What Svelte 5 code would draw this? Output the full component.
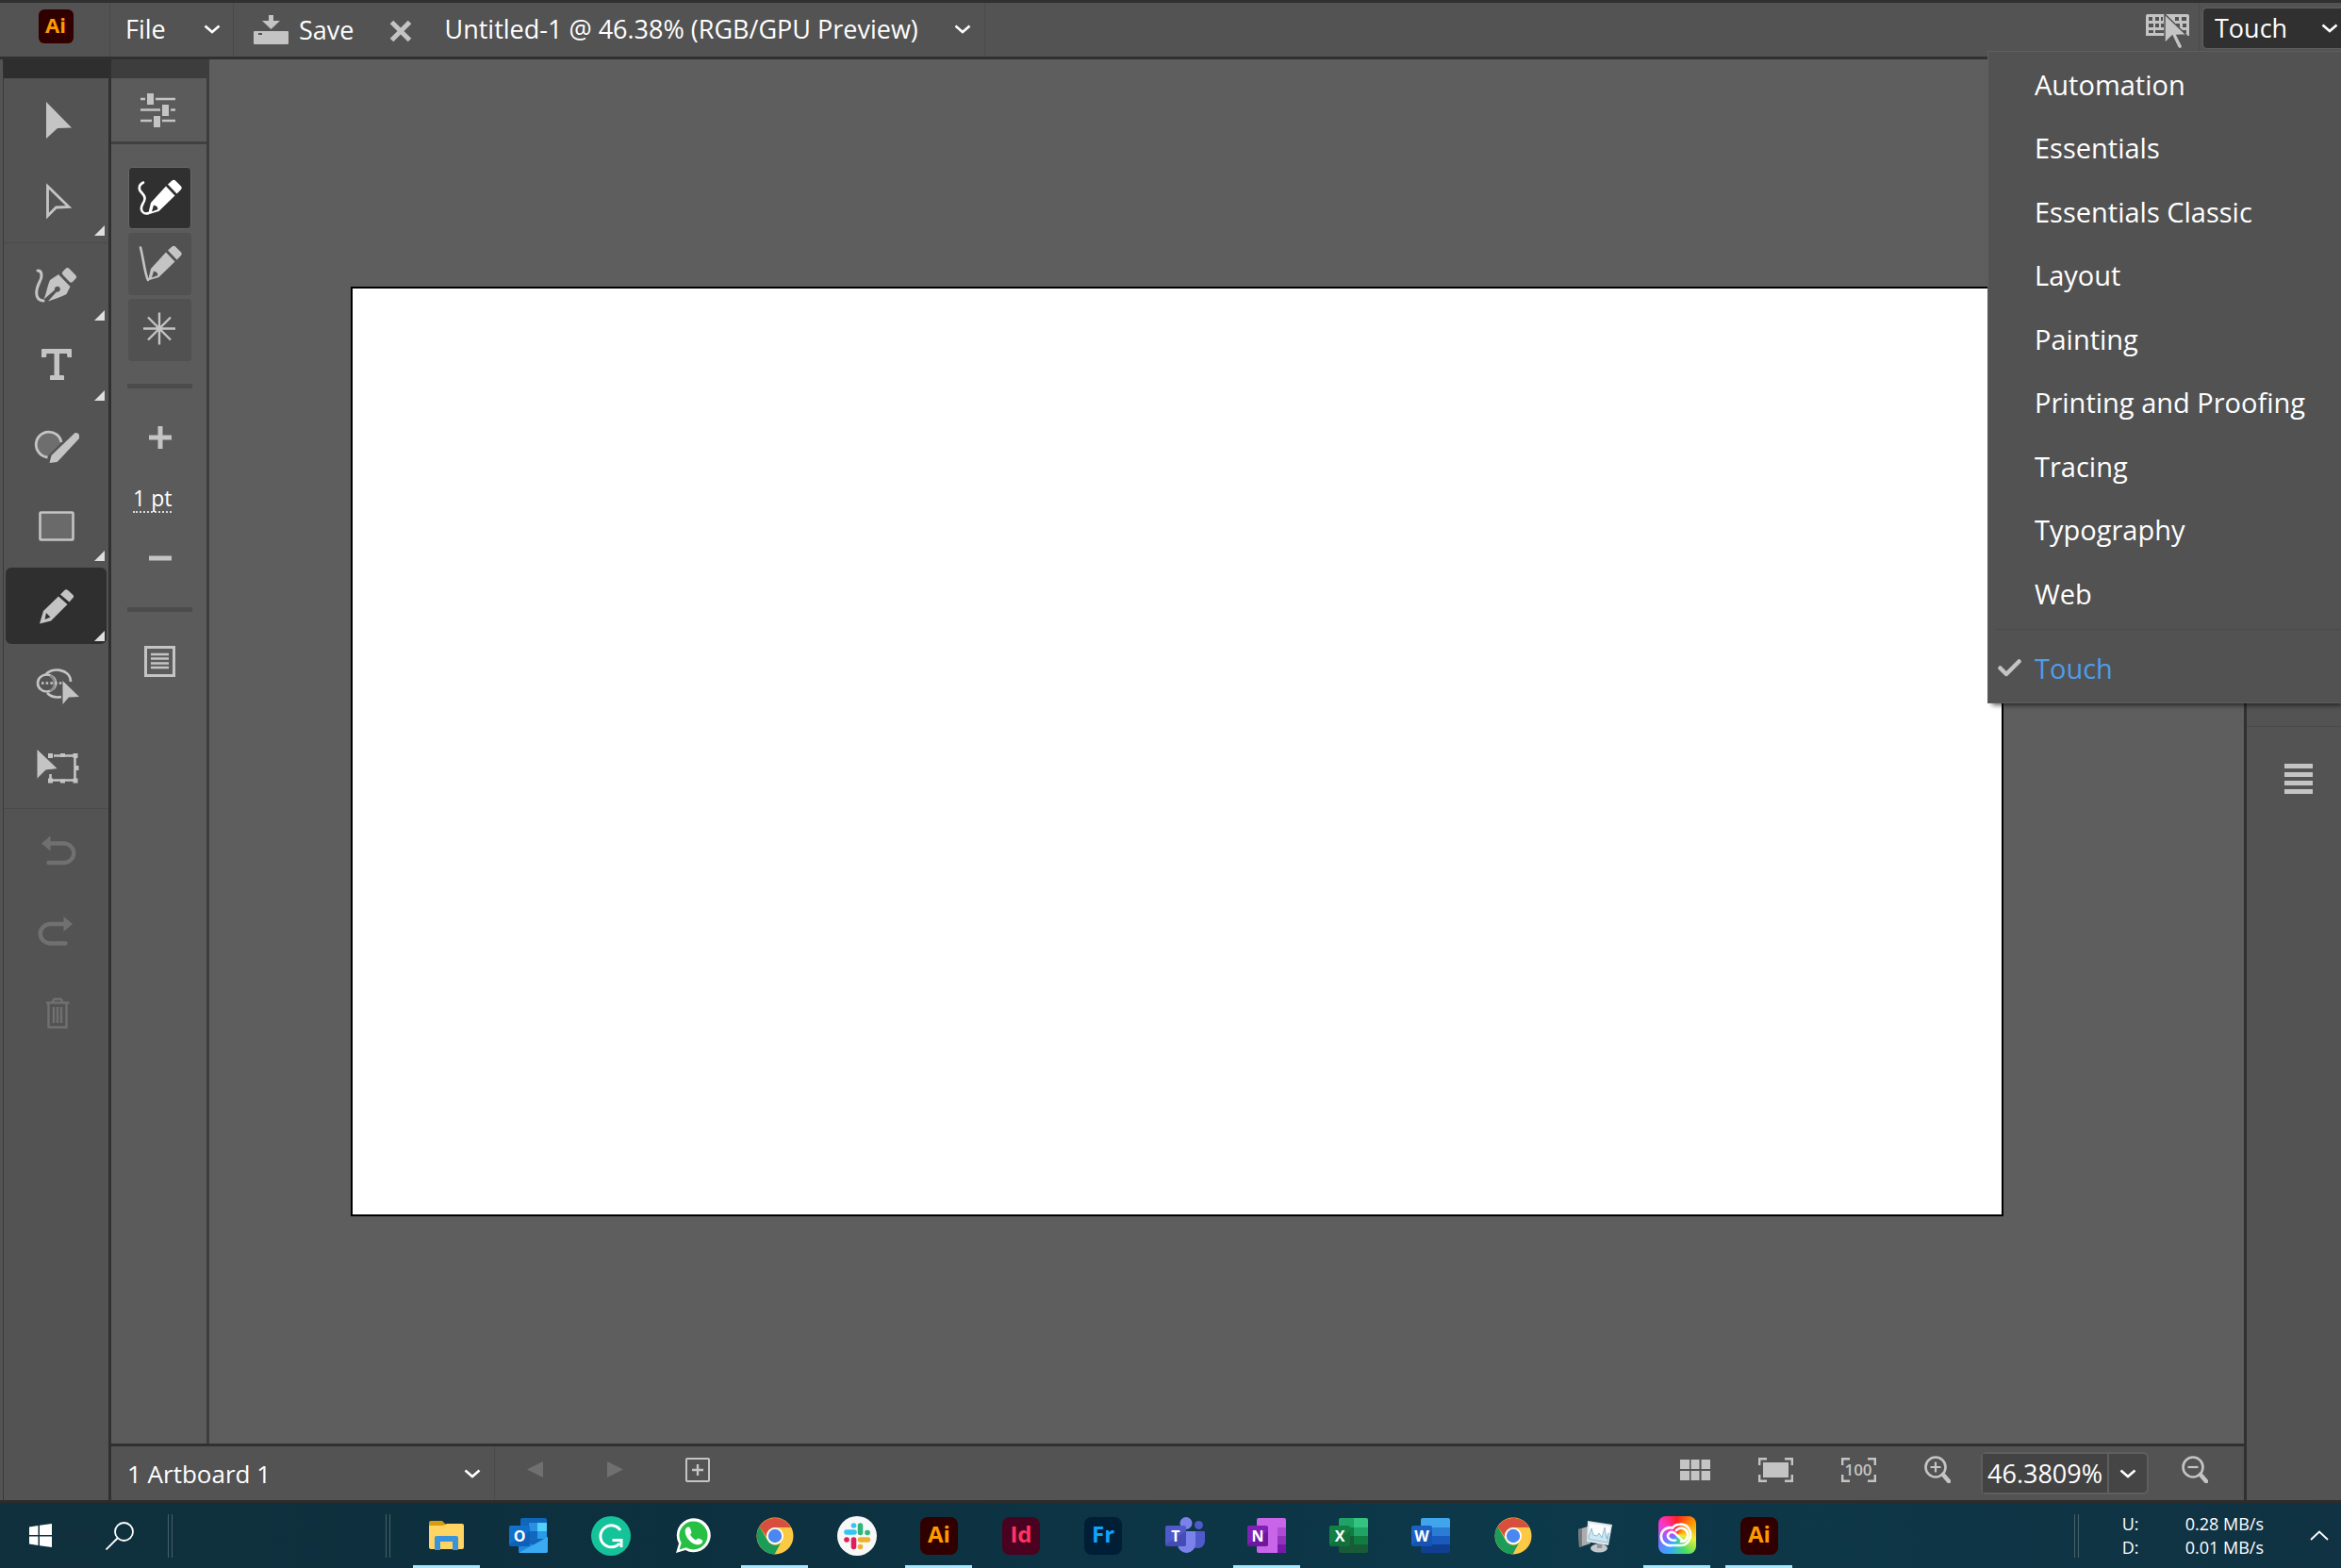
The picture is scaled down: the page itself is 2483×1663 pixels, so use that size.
<script lang="ts">
  type Tool = { id: string; label: string; flyout?: boolean };

  const toolGroups: Tool[][] = [
    [
      { id: "select", label: "Selection" },
      { id: "direct", label: "Direct Selection", flyout: true },
    ],
    [
      { id: "pen", label: "Curvature", flyout: true },
      { id: "type", label: "Type", flyout: true },
      { id: "blob", label: "Blob Brush" },
      { id: "rect", label: "Rectangle", flyout: true },
      { id: "pencil", label: "Pencil", flyout: true },
      { id: "builder", label: "Shape Builder" },
      { id: "transform", label: "Free Transform" },
    ],
    [
      { id: "undo", label: "Undo" },
      { id: "redo", label: "Redo" },
      { id: "trash", label: "Delete" },
    ],
  ];

  const modes = [
    { id: "smooth", label: "Smooth" },
    { id: "accurate", label: "Accurate" },
    { id: "burst", label: "Fidelity" },
  ];

  const workspaces = [
    "Automation",
    "Essentials",
    "Essentials Classic",
    "Layout",
    "Painting",
    "Printing and Proofing",
    "Tracing",
    "Typography",
    "Web",
  ];

  const apps = [
    { id: "folder", label: "File Explorer", running: true },
    { id: "outlook", label: "Outlook" },
    { id: "grammarly", label: "Grammarly" },
    { id: "whatsapp", label: "WhatsApp" },
    { id: "chrome", label: "Chrome", running: true },
    { id: "slack", label: "Slack" },
    { id: "ai", label: "Illustrator", running: true },
    { id: "id", label: "InDesign" },
    { id: "fr", label: "Fresco" },
    { id: "teams", label: "Teams" },
    { id: "onenote", label: "OneNote", running: true },
    { id: "excel", label: "Excel" },
    { id: "word", label: "Word" },
    { id: "chrome", label: "Chrome profile" },
    { id: "monitor", label: "Resource Monitor" },
    { id: "cc", label: "Creative Cloud", running: true },
    { id: "ai", label: "Illustrator window", running: true },
  ];

  let activeTool = $state("pencil");
  let activeMode = $state("smooth");
  let workspace = $state("Touch");
  let zoom = $state("46.3809%");
</script>

{#snippet chevron()}
  <svg class="chevron" width="18" height="10" viewBox="0 0 18 10">
    <path d="M1.5 1.5 9 8l7.5-6.5" fill="none" stroke="currentColor" stroke-width="2.6" />
  </svg>
{/snippet}

{#snippet pencilBody()}
  <path d="M15 29 31 11.5l9.5 10L23.500 38 12 41.5zM18 31.5l-2 7 6.5-2.5-1-3z" fill-rule="evenodd" />
  <path d="m33 9.5 4.500-4a2.500 2.500 0 0 1 3.500 0l6 6a2.500 2.500 0 0 1 0 3.500l-4.500 4.500z" />
{/snippet}

{#snippet glyph(id: string)}
  <svg width="49" height="49" viewBox="0 0 49 49" fill="currentColor">
    {#if id === "select"}
      <path d="m14 5 27 27.5-15 .5-12 11z" />
    {:else if id === "direct"}
      <path d="m15.5 9.5 22.5 22-13.5.5-9 9z" fill="none" stroke="currentColor" stroke-width="2.8" />
    {:else if id === "pen"}
      <path d="M5 9c5 0 5 7 2 12-4 8-6 19 4 20" fill="none" stroke="currentColor" stroke-width="3" stroke-linecap="round" />
      <path d="M11.5 39.5c3-7 3.5-14 6.5-20.5l9-6 12.5 13-4 8c-6 3-14 6-19.5 7.5l9-10a3 3 0 1 0-2-2z" />
      <rect x="31" y="9" width="15" height="9.5" rx="2.5" transform="rotate(45 38.5 13.7)" />
    {:else if id === "type"}
      <path d="M10 7h30a1 1 0 0 1 1 1v8h-4.5l-.5-4h-8v23h4a1 1 0 0 1 1 1v4H18v-4a1 1 0 0 1 1-1h3.500V12h-8l-.5 4H9V8a1 1 0 0 1 1-1z" />
    {:else if id === "blob"}
      <path d="M15 36.5A13.5 13.5 0 1 1 29.5 22z" fill="#6e6e6e" />
      <path d="M15.5 37A13.5 13.5 0 1 1 30 21" fill="none" stroke="currentColor" stroke-width="2.8" />
      <path d="m43 12.5a3.6 3.6 0 0 1 5.5 5L29 38.5l-3.5 3.5-8 1 2-8z" />
    {:else if id === "rect"}
      <rect x="7.5" y="10.5" width="35" height="29" rx="1" fill="#6a6a6a" stroke="currentColor" stroke-width="2.6" />
    {:else if id === "pencil"}
      <path d="m11 30 16-15.500 9.500 8.500L19 40.500 7 43.500zM14 32l-1.500 7 6-2.500z" fill-rule="evenodd" />
      <path d="m29 12.5 4.500-4.500q1.500-1.500 3.500 0l5.500 5q1.500 1.500 0 3l-4 4.500z" />
    {:else if id === "builder"}
      <path d="M13 13C19 4 40 6 40 20M15 32q6 6 15 4" fill="none" stroke="currentColor" stroke-width="2.6" />
      <ellipse cx="14.5" cy="21.5" rx="9.5" ry="9" fill="none" stroke="currentColor" stroke-width="2.6" />
      <path d="M18 13.5a9.5 9.5 0 0 1 0 16.500" fill="none" stroke="#8a8a8a" stroke-width="2.6" />
      <path d="M9 21.5h22" stroke="currentColor" stroke-width="2.6" stroke-dasharray="2.5 2.2" />
      <path d="m31.5 19 17.500 17-11 .5-6.500 7.500z" />
    {:else if id === "transform"}
      <path d="M22 13.5h22.500v26H18.500V33" fill="none" stroke="currentColor" stroke-width="2.6" />
      <path d="M42.5 11h5v5h-5zM42.500 37.500h5v5h-5zM16 37.500h5v5h-5zM16 11h5v5h-5zM29 11h5v4h-5zM29 38.500h5v4h-5zM44 24h4.500v5H44z" />
      <path d="m4 6 22.500 21.500-13 1.500L4 38.500z" stroke="#535353" stroke-width="1" />
    {:else if id === "undo"}
      <path d="M17 16.5h15.500a10.500 10 0 0 1 0 20.500h-16" fill="none" stroke="currentColor" stroke-width="4.4" stroke-linecap="round" />
      <path d="m9 16.5 9.500-8v16z" />
    {:else if id === "redo"}
      <path d="M34 16H18.500a10.500 10 0 0 0 0 20.500h16" fill="none" stroke="currentColor" stroke-width="4.4" stroke-linecap="round" />
      <path d="M42 16 32.500 8v16z" />
    {:else if id === "trash"}
      <path d="M14 13.500h24.500M16.500 14v25.500H35.500V14M21 13q0-3.500 3-3.500h4q3 0 3 3.500M22 18v17M26 18v17M30 18v17" fill="none" stroke="currentColor" stroke-width="2.4" />
    {:else if id === "smooth"}
      <path d="M7 7.500C2 10 1.500 14.500 5 18c5 5 4 8 1.500 12-4 7 .5 12 6 10" fill="none" stroke="currentColor" stroke-width="2.6" stroke-linecap="round" />
      {@render pencilBody()}
    {:else if id === "accurate"}
      <path d="M4 6.500c3 11 5 30 8 34.500" fill="none" stroke="currentColor" stroke-width="2.6" stroke-linecap="round" />
      {@render pencilBody()}
    {:else if id === "burst"}
      <path d="M24 5.500v34M7 22.500h34M12 10.500l24 24M36 10.500l-24 24" fill="none" stroke="currentColor" stroke-width="2.4" />
    {/if}
  </svg>
{/snippet}

{#snippet adobe(text: string, bg: string, fg: string)}
  <rect x="1" y="1" width="40" height="40" rx="8" fill={bg} />
  <text class="mark" x="21" y="28" font-size="24" text-anchor="middle" fill={fg}>{text}</text>
{/snippet}

{#snippet office(letter: string, from: string, to: string)}
  <rect x="0" y="10" width="22" height="22" rx="2" fill={from} />
  <path d="M0 30 22 16v14a2 2 0 0 1-2 2H2a2 2 0 0 1-2-2z" fill={to} opacity="0.5" />
  <text class="mark" x="11" y="27" font-size="16" text-anchor="middle" fill="#fff">{letter}</text>
{/snippet}

{#snippet appIcon(id: string)}
  <svg width="42" height="42" viewBox="0 0 42 42">
    {#if id === "folder"}
      <path d="M2 7a2 2 0 0 1 2-2h12l4 4v6H2z" fill="#d99a0c" />
      <path d="M2 10h15l4-2h16a2 2 0 0 1 2 2v23a2 2 0 0 1-2 2H4a2 2 0 0 1-2-2z" fill="#ffd463" />
      <path d="M8 36V23a2 2 0 0 1 2-2h21a2 2 0 0 1 2 2v13h-6v-9H14v9z" fill="#3a94dc" />
    {:else if id === "outlook"}
      <rect x="12" y="2" width="28" height="34" rx="2" fill="#1066b8" />
      <path d="M21 7h9v9h-9z" fill="#2a8fe0" />
      <path d="M30 7h10v9H30z" fill="#50d0fa" />
      <path d="M21 16h9v10h-9z" fill="#1268bd" />
      <path d="M30 16h10v8H30z" fill="#2a9aea" />
      <path d="M10 22 26 31l15-9v15a2 2 0 0 1-2 2H12a2 2 0 0 1-2-2z" fill="#1d86dc" />
      <path d="m10 39 31-17v15a2 2 0 0 1-2 2z" fill="#3aaaf2" />
      {@render office("O", "#1070cc", "#0a52a8")}
    {:else if id === "grammarly"}
      <circle cx="21" cy="21" r="21" fill="#15c39a" />
      <path d="M31 15a11.5 11.5 0 1 0-1 14M22.500 25.500H32V33" fill="none" stroke="#fff" stroke-width="3" />
    {:else if id === "whatsapp"}
      <path d="m3 39 3-10a18 18 0 1 1 7 7z" fill="#fff" />
      <circle cx="21.5" cy="20.5" r="15" fill="#27c045" />
      <path d="m6.5 35.5 2.500-8 5.500 5.500z" fill="#27c045" />
      <path d="M13 14c2-3 4-3 5-1l1.500 4q0 1-1.500 2.500 2 4 6 6 2-2 3-2l4 2q1 3-3 4.500c-7 2-17-8-15-16z" fill="#fff" />
    {:else if id === "chrome"}
      <circle cx="21" cy="21" r="19.5" fill="#fcc944" />
      <path d="M4.500 11A19.500 19.500 0 0 1 38 12H21a9 9 0 0 0-9 10z" fill="#d94f3d" />
      <path d="M4.500 11 13 25.500a9 9 0 0 0 14 3L20.500 40.500A19.500 19.500 0 0 1 4.500 11z" fill="#1b9c58" />
      <circle cx="21" cy="21" r="9" fill="#fff" />
      <circle cx="21" cy="21" r="7.2" fill="#4b87f0" />
    {:else if id === "slack"}
      <circle cx="21" cy="21" r="21" fill="#f8f8f8" />
      <g stroke-width="5.6" stroke-linecap="round">
        <path d="M10 17h8M17.500 10h.1" stroke="#36c5f0" />
        <path d="M24.500 10v7.500M32 17.500h.1" stroke="#2eb67d" />
        <path d="M24.500 25h8M24.500 32.500h.1" stroke="#ecb22e" />
        <path d="M17.500 25v7.500M10 25h.1" stroke="#e01e5a" />
      </g>
    {:else if id === "ai"}
      {@render adobe("Ai", "#300000", "#ff9a00")}
    {:else if id === "id"}
      {@render adobe("Id", "#49021f", "#ff3366")}
    {:else if id === "fr"}
      {@render adobe("Fr", "#001e36", "#0fa4ff")}
    {:else if id === "teams"}
      <circle cx="22" cy="7.5" r="6.5" fill="#7b83eb" />
      <circle cx="35.5" cy="9.5" r="4.5" fill="#5059c9" />
      <path d="M30 16h11a1 1 0 0 1 1 1v10a8 8 0 0 1-12 6z" fill="#5059c9" />
      <path d="M13 16h19v13a9.500 9.500 0 0 1-19 1z" fill="#7b83eb" />
      {@render office("T", "#5059c9", "#3940a5")}
    {:else if id === "onenote"}
      <rect x="10" y="2" width="31" height="37" rx="2" fill="#c965e8" />
      <path d="M32 12h9v9h-9z" fill="#ae4bd5" />
      <path d="M32 21h9v9h-9z" fill="#9332bf" />
      <path d="M32 30h9v7a2 2 0 0 1-2 2h-7z" fill="#7719aa" />
      {@render office("N", "#8020b4", "#5b1088")}
    {:else if id === "excel"}
      <rect x="10" y="2" width="31" height="37" rx="2" fill="#185c37" />
      <path d="M10 12V4a2 2 0 0 1 2-2h14v10z" fill="#21a366" />
      <path d="M26 2h13a2 2 0 0 1 2 2v8H26z" fill="#33c481" />
      <path d="M10 12h16v9H10z" fill="#107c41" />
      <path d="M26 12h15v9H26z" fill="#21a366" />
      <path d="M26 21h15v9H26z" fill="#107c41" />
      {@render office("X", "#128045", "#0c6233")}
    {:else if id === "word"}
      <rect x="10" y="2" width="31" height="37" rx="2" fill="#103f91" />
      <path d="M10 12V4a2 2 0 0 1 2-2h27a2 2 0 0 1 2 2v8z" fill="#41a5ee" />
      <path d="M10 12h31v9H10z" fill="#2b7cd3" />
      <path d="M10 21h31v9H10z" fill="#185abd" />
      {@render office("W", "#1c60c4", "#1048a0")}
    {:else if id === "monitor"}
      <path d="m3 14 10-3 3 18-12 4z" fill="#a9adb0" />
      <path d="m3 14 4-1v19l-3 1z" fill="#74797c" />
      <ellipse cx="25" cy="34" rx="9" ry="4.5" fill="#c5c8ca" />
      <path d="m23 26 6 1-1 7h-5z" fill="#8f9497" />
      <path d="m13 5 26 4-4 22-23-4z" fill="#e4e7e9" />
      <path d="m15 7.500 22 3.500-3 17-20-3.500z" fill="#fbfdfe" />
      <path d="m14 22 3-9 2 7 4 1 2-3 3 5 3-11 2 12 2-6-1 10-20-3.500z" fill="#cde7f2" stroke="#8dbdd3" />
    {:else if id === "cc"}
      <foreignObject x="1" y="0" width="40" height="40"><div class="rainbow"></div></foreignObject>
      <path d="M15 31a9.500 9.500 0 1 1 1-18.500C19 8 28 7 32.500 12 38 19 34 31 25 31z" fill="none" stroke="#fff" stroke-width="2.6" />
      <path d="m27 26-8-7.500c-5-4-10 1-7 5q3 3 7 2" fill="none" stroke="#fff" stroke-width="2.6" stroke-linecap="round" />
      <path d="M20 15c5-5 13-1 12 6q-1 6-7 6" fill="none" stroke="#fff" stroke-width="2.6" stroke-linecap="round" />
    {/if}
  </svg>
{/snippet}

<div class="desktop">
  <header class="topbar">
    <div class="logo-cell">
      <svg width="37" height="36" viewBox="0 0 37 36" role="img" aria-label="Illustrator">
        <rect width="37" height="36" rx="6" fill="#300000" />
        <text class="mark" x="18" y="25" font-size="22" text-anchor="middle" fill="#ff9a00">Ai</text>
      </svg>
    </div>
    <button class="bar-btn file">File {@render chevron()}</button>
    <button class="bar-btn save">
      <svg width="37" height="32" viewBox="0 0 37 32" fill="#c4c4c4">
        <path d="M16 0h5v6h7l-9.500 9L9 6h7z" />
        <path d="M1 17h35a1 1 0 0 1 1 1v12a1 1 0 0 1-1 1H1a1 1 0 0 1-1-1V18a1 1 0 0 1 1-1zm4 2v2h4v-2z" fill-rule="evenodd" />
      </svg>
      Save
    </button>
    <button class="bar-btn close" aria-label="Close document">
      <svg width="24" height="24" viewBox="0 0 24 24">
        <path d="m2.5 2.500 19 19M21.500 2.500l-19 19" stroke="#c4c4c4" stroke-width="5" />
      </svg>
    </button>
    <button class="bar-btn title">Untitled-1 @ 46.38% (RGB/GPU Preview) {@render chevron()}</button>
    <button class="bar-btn keyboard" aria-label="Keyboard and pointer">
      <svg width="46" height="38" viewBox="0 0 46 38">
        <path d="M2 0h42a2 2 0 0 1 2 2v21H0V2a2 2 0 0 1 2-2z" fill="#c4c4c4" />
        <path
          d="M3 3h4v4H3zM10 3h4v4h-4zM16 3h2v4h-2zM31 3h4v4h-4zM38 3h5v4h-5zM3 10h5v4H3zM10 10h4v4h-4zM16 10h3v4h-3zM32 10h4v4h-4zM39 10h4v4h-4zM3 17h5v3H3zM10 17h9v3h-9zM39 17h4v3h-4z"
          fill="#535353"
        />
        <path d="M20 0v31l8-8 6 12.500a2.500 2.500 0 0 0 4.500-2L33 22.500l10-.5z" fill="#c4c4c4" stroke="#535353" stroke-width="1.5" />
      </svg>
    </button>
    <div class="workspace-cell">
      <div class="select-wrap dark">
        <select aria-label="Workspace" bind:value={workspace}>
          <option>Touch</option>
        </select>
        {@render chevron()}
      </div>
      <ul class="menu">
        {#each workspaces as name}
          <li><button class="menu-item">{name}</button></li>
        {/each}
        <li class="current">
          <button class="menu-item checked">
            <svg width="25" height="19" viewBox="0 0 25 19">
              <path d="m2.5 9.500 6.500 6.500L22.500 2.500" fill="none" stroke="#c4c4c4" stroke-width="4.5" stroke-linecap="round" stroke-linejoin="round" />
            </svg>
            Touch
          </button>
        </li>
      </ul>
    </div>
  </header>

  <main>
    <nav class="toolbar" aria-label="Tools">
      {#each toolGroups as group}
        <div class="tool-group">
          {#each group as tool}
            <button
              class="tool"
              class:active={activeTool === tool.id}
              disabled={group === toolGroups[2]}
              aria-label={tool.label}
              onclick={() => (activeTool = tool.id)}
            >
              {@render glyph(tool.id)}
              {#if tool.flyout}<span class="flyout"></span>{/if}
            </button>
          {/each}
        </div>
      {/each}
    </nav>

    <div class="workarea">
      <div class="document">
        <aside class="options">
          <button class="options-head" aria-label="Tool options">
            <svg width="37" height="36" viewBox="0 0 37 36">
              <path d="M0 6h5M16 6h21M0 17.500h21M32 17.500h5M0 29h12M23 29h14" stroke="#c4c4c4" stroke-width="2.6" />
              <path d="M7 0h7v12H7zM23 12h7v12h-7zM14 24h7v12h-7z" fill="#c4c4c4" />
            </svg>
          </button>
          <div class="options-body">
            <div class="modes">
              {#each modes as mode}
                <button
                  class="mode"
                  class:active={activeMode === mode.id}
                  aria-label={mode.label}
                  onclick={() => (activeMode = mode.id)}>{@render glyph(mode.id)}</button
                >
              {/each}
            </div>
            <div class="stroke">
              <button class="step" aria-label="Increase stroke">
                <svg width="24" height="24" viewBox="0 0 24 24">
                  <path d="M12 0v24M0 12h24" stroke="#c4c4c4" stroke-width="5" />
                </svg>
              </button>
              <button class="weight">1 pt</button>
              <button class="step" aria-label="Decrease stroke">
                <svg width="24" height="24" viewBox="0 0 24 24">
                  <path d="M0 12h24" stroke="#c4c4c4" stroke-width="5" />
                </svg>
              </button>
            </div>
            <button class="step" aria-label="Properties">
              <svg width="33" height="33" viewBox="0 0 33 33" fill="none" stroke="#c4c4c4">
                <rect x="1.5" y="1.5" width="30" height="30" stroke-width="3" />
                <path d="M7 9h19M7 13.500h19M7 18.500h19M7 23h19" stroke-width="2.4" />
              </svg>
            </button>
          </div>
        </aside>
        <section class="canvas" aria-label="Canvas">
          <div class="artboard"></div>
        </section>
      </div>

      <footer class="status">
        <div class="select-wrap artboards">
          <select aria-label="Artboard">
            <option>1 Artboard 1</option>
          </select>
          {@render chevron()}
        </div>
        <div class="status-nav">
          <button class="bar-btn" disabled aria-label="Previous artboard">
            <svg width="18" height="18" viewBox="0 0 18 18"><path d="M17 0v17L0 8.500z" fill="#707070" /></svg>
          </button>
          <button class="bar-btn" disabled aria-label="Next artboard">
            <svg width="18" height="18" viewBox="0 0 18 18"><path d="M1 0v17l17-8.500z" fill="#707070" /></svg>
          </button>
          <button class="bar-btn" aria-label="Add artboard">
            <svg width="26" height="26" viewBox="0 0 26 26" fill="none" stroke="#c4c4c4">
              <rect x="1" y="1" width="24" height="24" rx="1" stroke-width="2" />
              <path d="M13 7v12M7 13h12" stroke-width="2.4" />
            </svg>
          </button>
        </div>
        <div class="status-view">
          <button class="bar-btn" aria-label="Artboard grid">
            <svg width="32" height="22" viewBox="0 0 32 22" fill="#c4c4c4">
              <path d="M0 0h10v10H0zM11.500 0h9v10h-9zM22.500 0H32v10h-9.500zM0 12h10v10H0zM11.500 12h9v10h-9zM22.500 12H32v10h-9.500z" />
            </svg>
          </button>
          <button class="bar-btn" aria-label="Fit artboard">
            <svg width="37" height="26" viewBox="0 0 37 26">
              <path d="M9 1.200H1.200V8M28 1.200h7.800V8M9 24.800H1.200V18M28 24.800h7.800V18" fill="none" stroke="#c4c4c4" stroke-width="2.4" />
              <path d="M5 5h27v16H5z" fill="#c4c4c4" />
            </svg>
          </button>
          <button class="bar-btn" aria-label="Actual size">
            <svg width="37" height="26" viewBox="0 0 37 26">
              <path d="M9 1.200H1.200V8M28 1.200h7.800V8M9 24.800H1.200V18M28 24.800h7.800V18" fill="none" stroke="#c4c4c4" stroke-width="2.4" />
              <text class="mark light" x="18" y="19" font-size="17" text-anchor="middle" fill="#c4c4c4">100</text>
            </svg>
          </button>
          <button class="bar-btn" aria-label="Zoom in">
            <svg width="28" height="29" viewBox="0 0 28 29" fill="none" stroke="#c4c4c4">
              <circle cx="12" cy="12" r="10.5" stroke-width="2.6" />
              <path d="M12 6.500v11M6.500 12h11" stroke-width="2.2" />
              <path d="m20 20 6 7" stroke-width="4.5" stroke-linecap="round" />
            </svg>
          </button>
          <div class="zoom">
            <input aria-label="Zoom level" bind:value={zoom} />
            <button class="zoom-drop" aria-label="Zoom presets">{@render chevron()}</button>
          </div>
          <button class="bar-btn" aria-label="Zoom out">
            <svg width="28" height="29" viewBox="0 0 28 29" fill="none" stroke="#c4c4c4">
              <circle cx="12" cy="12" r="10.5" stroke-width="2.6" />
              <path d="M6.500 12h11" stroke-width="2.2" />
              <path d="m20 20 6 7" stroke-width="4.5" stroke-linecap="round" />
            </svg>
          </button>
        </div>
      </footer>
    </div>

    <aside class="dock">
      <div class="dock-head"></div>
      <button class="bar-btn" aria-label="Panels">
        <svg width="30" height="32" viewBox="0 0 30 32" fill="#c4c4c4">
          <path d="M0 0h30v5H0zM0 9h30v5H0zM0 18h30v5H0zM0 27h30v5H0z" />
        </svg>
      </button>
    </aside>
  </main>

  <div class="taskbar">
    <button class="bar-btn start" aria-label="Start">
      <svg width="24" height="25" viewBox="0 0 24 25" fill="#fff">
        <path d="M0 3.500 9.500 2v10H0zM11 1.800 24 0v12H11zM0 13.500h9.500V23L0 21.500zM11 13.500h13V25l-13-1.800z" />
      </svg>
    </button>
    <button class="bar-btn search" aria-label="Search">
      <svg width="30" height="30" viewBox="0 0 30 30" fill="none" stroke="#fff" stroke-width="1.8">
        <circle cx="19.5" cy="10.5" r="9.5" />
        <path d="M12.500 17.500.5 29.500" />
      </svg>
    </button>
    <span class="grip"></span>
    <div class="pinned-gap"></div>
    <span class="grip"></span>
    <div class="apps">
      {#each apps as app}
        <button class="app" class:running={app.running} aria-label={app.label}>{@render appIcon(app.id)}</button>
      {/each}
    </div>
    <span class="grip end"></span>
    <div class="net">
      <span>U:</span><span>0.28 MB/s</span>
      <span>D:</span><span>0.01 MB/s</span>
    </div>
    <button class="bar-btn tray" aria-label="Show hidden icons">
      <svg width="20" height="11" viewBox="0 0 20 11">
        <path d="m1 10 9-8.500 9 8.500" fill="none" stroke="#fff" stroke-width="1.8" />
      </svg>
    </button>
  </div>
</div>

<style>
  :global(body) {
    margin: 0;
    background: #535353;
  }

  .desktop {
    --panel: #535353;
    --line: #303030;
    --icon: #c4c4c4;
    display: flex;
    flex-direction: column;
    min-height: 100vh;
    overflow: hidden;
    box-sizing: border-box;
    background: var(--panel);
    color: #fff;
    font-family: "Open Sans", "Noto Sans", sans-serif;
    font-size: 27px;
    line-height: 36px;
  }

  button,
  select,
  input {
    margin: 0;
    padding: 0;
    border: 0;
    background: none;
    color: inherit;
    font: inherit;
  }

  svg {
    display: block;
    flex-shrink: 0;
  }

  .mark {
    font-family: "Open Sans", "Noto Sans", sans-serif;
    font-weight: 700;
  }

  .mark.light {
    font-weight: 600;
  }

  .bar-btn {
    display: flex;
    align-items: center;
    justify-content: center;
    white-space: nowrap;
  }

  /* top bar */
  .topbar {
    display: flex;
    height: 57px;
    border-top: 3px solid var(--line);
    border-bottom: 3px solid var(--line);
  }

  .logo-cell {
    display: flex;
    justify-content: center;
    width: 117px;
    padding: 7px 0 0 2px;
    box-sizing: border-box;
    border-right: 1px solid #4a4a4a;
  }

  .file {
    justify-content: space-between;
    width: 131px;
    box-sizing: border-box;
    padding: 0 13px 2px 16px;
    border-right: 1px solid #4a4a4a;
  }

  .save {
    gap: 11px;
    padding-left: 21px;
  }

  .close {
    padding: 2px 34px 0 38px;
  }

  .title {
    gap: 38px;
    padding: 0 14px 2px 0;
    border-right: 1px solid #4a4a4a;
  }

  .keyboard {
    margin-left: auto;
    padding: 4px 10px 0 0;
    border-right: 1px solid #4a4a4a;
  }

  .workspace-cell {
    position: relative;
    width: 150px;
    padding: 5px 0 8px 3px;
    box-sizing: border-box;
  }

  .select-wrap {
    display: flex;
    align-items: center;
    position: relative;
    height: 100%;
  }

  .select-wrap select {
    appearance: none;
    width: 100%;
    height: 100%;
    padding-left: 12px;
  }

  .select-wrap .chevron {
    position: absolute;
    right: 14px;
    pointer-events: none;
  }

  .dark {
    background: var(--line);
    border: 1px solid #606060;
    border-right: 0;
    border-radius: 5px 0 0 5px;
    box-sizing: border-box;
  }

  .select-wrap.dark .chevron {
    right: 3px;
  }

  .menu {
    position: absolute;
    z-index: 2;
    top: 51px;
    right: 0;
    width: 375px;
    box-sizing: border-box;
    margin: 0;
    padding: 1px 0 2px;
    list-style: none;
    background: #525252;
    border: 1px solid #5e5e5e;
    border-right: 0;
    box-shadow: 3px 4px 5px -2px rgba(0, 0, 0, 0.6);
    font-size: 29px;
  }

  .menu-item {
    display: flex;
    align-items: center;
    width: 100%;
    height: 67px;
    padding-left: 49px;
  }

  .menu li:nth-child(even) {
    padding-bottom: 1px;
  }

  .menu .current {
    margin: 4px 0 0 7px;
    padding: 7px 0 0;
    border-top: 1px solid #4b4b4b;
  }

  .checked {
    gap: 14px;
    padding-left: 3px;
    color: #4f9ce8;
  }

  main {
    display: flex;
    flex: 1;
    border-bottom: 3px solid #2c2c2c;
  }

  /* tool column */
  .toolbar {
    width: 111px;
    flex-shrink: 0;
    border-top: 20px solid #2e2e2e;
    border-right: 3px solid var(--line);
    border-left: 1px solid #3a3a3a;
    margin-left: 3px;
  }

  .tool-group {
    display: flex;
    flex-direction: column;
    padding: 2px 0;
  }

  .tool-group + .tool-group {
    border-top: 1px solid #4a4a4a;
  }

  .tool-group:last-child {
    gap: 1px;
  }

  .tool {
    display: flex;
    position: relative;
    align-items: center;
    justify-content: center;
    width: 100%;
    height: 85px;
    border: 2px solid transparent;
    border-radius: 8px;
    background-clip: padding-box;
    color: var(--icon);
  }

  .tool.active {
    background-color: #2f2f2f;
  }

  .tool:disabled {
    color: #707070;
  }

  .flyout {
    position: absolute;
    right: 2px;
    bottom: 3px;
    border-bottom: 11px solid #dedede;
    border-left: 11px solid transparent;
  }

  /* options column */
  .workarea {
    display: flex;
    flex: 1;
    flex-direction: column;
    min-width: 0;
  }

  .document {
    display: flex;
    flex: 1;
  }

  .options {
    display: flex;
    flex-direction: column;
    width: 101px;
    flex-shrink: 0;
    background: #5b5b5b;
    border-top: 20px solid #3d3d3d;
    border-right: 3px solid #3d3d3d;
  }

  .options-head {
    display: flex;
    align-items: center;
    justify-content: center;
    height: 70px;
    padding-right: 2px;
    border-bottom: 3px solid #404040;
  }

  .options-body {
    display: flex;
    flex-direction: column;
    align-items: center;
    padding: 24px 0 0 2px;
  }

  .modes {
    display: flex;
    flex-direction: column;
    gap: 4px;
  }

  .mode {
    display: flex;
    align-items: center;
    justify-content: center;
    width: 67px;
    height: 66px;
    border-radius: 4px;
    background: #515151;
    color: var(--icon);
  }

  .mode.active {
    background: var(--line);
    border: 1px solid #676767;
    color: #fff;
  }

  .stroke {
    display: flex;
    flex-direction: column;
    align-items: center;
    width: 69px;
    margin: 24px 0 36px;
    padding: 40px 0;
    border-top: 5px solid #4c4c4c;
    border-bottom: 5px solid #4c4c4c;
  }

  .weight {
    align-self: flex-start;
    margin: 38px 0 36px 6px;
    border-bottom: 2px dotted #d8d8d8;
    font-size: 23px;
    line-height: 28px;
  }

  /* canvas */
  .canvas {
    display: flex;
    flex: 1;
    padding: 241px 255px 241px 150px;
    background: #5e5e5e;
  }

  .artboard {
    flex: 1;
    background: #fff;
    border: 2px solid #000;
  }

  /* status bar */
  .status {
    display: flex;
    height: 57px;
    border-top: 3px solid var(--line);
  }

  .artboards {
    width: 407px;
    box-sizing: border-box;
    border-right: 1px solid #4a4a4a;
    font-size: 26px;
  }

  .artboards select {
    padding-left: 17px;
  }

  .status-nav,
  .status-view {
    display: flex;
    align-items: center;
  }

  .status .bar-btn {
    padding-bottom: 8px;
  }

  .status-nav {
    gap: 66px;
    padding-left: 34px;
  }

  .status-view {
    gap: 51px;
    margin-left: auto;
    padding-right: 38px;
  }

  .zoom {
    display: flex;
    width: 178px;
    height: 45px;
    box-sizing: border-box;
    margin: 0 -16px 0 -19px;
    border: 2px solid #5f5f5f;
    border-radius: 6px;
    background: #454545;
  }

  .zoom input {
    width: 134px;
    padding-left: 5px;
    box-sizing: border-box;
    border-right: 2px solid #5f5f5f;
    background: #434343;
  }

  .zoom-drop {
    display: flex;
    flex: 1;
    align-items: center;
    justify-content: center;
  }

  /* right dock */
  .dock {
    display: flex;
    flex-direction: column;
    align-items: center;
    width: 100px;
    flex-shrink: 0;
    border-left: 3px solid var(--line);
  }

  .dock-head {
    width: 100%;
    height: 707px;
    margin-bottom: 39px;
    border-bottom: 1px solid #4a4a4a;
  }

  .dock .bar-btn {
    margin-left: 10px;
  }

  /* taskbar */
  .taskbar {
    display: flex;
    align-items: center;
    height: 69px;
    background: linear-gradient(90deg, #0f303c, #0d303f 30%, #0c394a 65%, #103242);
  }

  .start {
    padding: 0 28px 0 31px;
  }

  .search {
    padding: 0 36px 0 29px;
  }

  .grip {
    width: 3px;
    height: 46px;
    border-right: 1px solid #456069;
    border-left: 1px solid #456069;
  }

  .pinned-gap {
    width: 226px;
  }

  .apps {
    display: flex;
    height: 100%;
    margin-left: 16px;
  }

  .app {
    display: flex;
    align-items: center;
    justify-content: center;
    width: 71px;
    margin: 0 8px;
    border-top: 3px solid transparent;
    border-bottom: 3px solid transparent;
  }

  .app.running {
    border-bottom-color: #a6e6fc;
  }

  .rainbow {
    width: 40px;
    height: 40px;
    border-radius: 8px;
    background: conic-gradient(from 0deg, #f22, #f90, #ee3, #4d6, #3af, #86f, #f3c, #f22);
  }

  .grip.end {
    margin-left: auto;
  }

  .net {
    display: grid;
    grid-template-columns: 67px auto;
    margin: 0 49px 0 46px;
    font-size: 18px;
    line-height: 25px;
  }

  .tray {
    padding-right: 13px;
  }
</style>
